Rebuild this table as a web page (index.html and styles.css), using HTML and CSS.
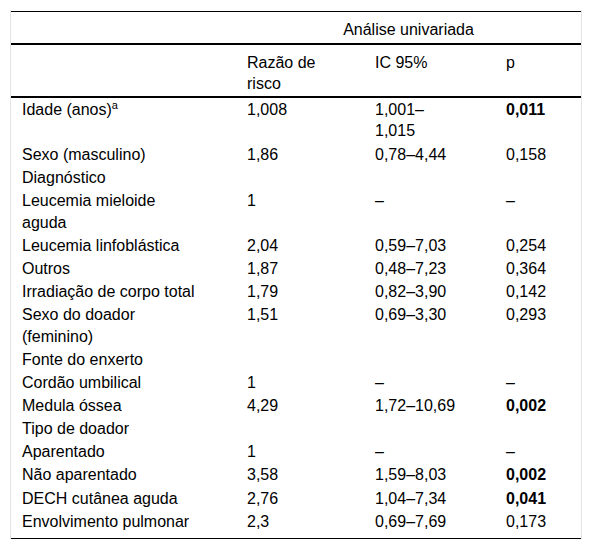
FILE: index.html
```html
<!DOCTYPE html>
<html lang="pt">
<head>
<meta charset="utf-8">
<link rel="stylesheet" href="styles.css">
</head>
<body>
<div class="frame">
<table class="tbl">
<colgroup><col class="c1"><col class="c2"><col class="c3"><col class="c4"></colgroup>
<thead>
<tr class="group"><th></th><th colspan="3" class="center">Análise univariada</th></tr>
<tr class="cols"><th></th><th>Razão de risco</th><th>IC 95%</th><th>p</th></tr>
</thead>
<tbody>
<tr><td>Idade (anos)<sup>a</sup></td><td>1,008</td><td>1,001–<br>1,015</td><td><b>0,011</b></td></tr>
<tr><td>Sexo (masculino)</td><td>1,86</td><td>0,78–4,44</td><td>0,158</td></tr>
<tr><td>Diagnóstico</td><td></td><td></td><td></td></tr>
<tr><td>Leucemia mieloide aguda</td><td>1</td><td>–</td><td>–</td></tr>
<tr><td>Leucemia linfoblástica</td><td>2,04</td><td>0,59–7,03</td><td>0,254</td></tr>
<tr><td>Outros</td><td>1,87</td><td>0,48–7,23</td><td>0,364</td></tr>
<tr><td>Irradiação de corpo total</td><td>1,79</td><td>0,82–3,90</td><td>0,142</td></tr>
<tr><td>Sexo do doador (feminino)</td><td>1,51</td><td>0,69–3,30</td><td>0,293</td></tr>
<tr><td>Fonte do enxerto</td><td></td><td></td><td></td></tr>
<tr><td>Cordão umbilical</td><td>1</td><td>–</td><td>–</td></tr>
<tr><td>Medula óssea</td><td>4,29</td><td>1,72–10,69</td><td><b>0,002</b></td></tr>
<tr><td>Tipo de doador</td><td></td><td></td><td></td></tr>
<tr><td>Aparentado</td><td>1</td><td>–</td><td>–</td></tr>
<tr><td>Não aparentado</td><td>3,58</td><td>1,59–8,03</td><td><b>0,002</b></td></tr>
<tr><td>DECH cutânea aguda</td><td>2,76</td><td>1,04–7,34</td><td><b>0,041</b></td></tr>
<tr class="last"><td>Envolvimento pulmonar</td><td>2,3</td><td>0,69–7,69</td><td>0,173</td></tr>
</tbody>
</table>
</div>
</body>
</html>
```
FILE: styles.css
```css
html, body {
  margin: 0;
  padding: 0;
  background: #fff;
}
body {
  padding: 10px 10px 0 10px;
  font-family: "Liberation Sans", Arial, sans-serif;
  font-size: 16px;
  color: #000;
}
.frame {
  border-left: 1px solid #e4e4e4;
  border-right: 1px solid #e4e4e4;
  padding-top: 1px;
  width: 570px;
}
.tbl {
  width: 570px;
  border-collapse: collapse;
  table-layout: fixed;
  line-height: 21.9px;
}
.c1 { width: 225px; }
.c2 { width: 128px; }
.c3 { width: 131px; }
.c4 { width: 86px; }
.tbl th {
  font-weight: normal;
}
.tbl th, .tbl td {
  padding: 0.6px 38px 0.6px 11px;
  vertical-align: top;
  text-align: left;
}
.tbl .group th.center {
  text-align: center;
  padding-left: 0;
  padding-right: 0;
}
.group th {
  border-top: 1px solid #000;
  border-bottom: 2px solid #000;
  padding-top: 7px;
  padding-bottom: 2px;
}
.cols th {
  border-bottom: 2px solid #000;
  padding-top: 6.6px;
  padding-bottom: 0.6px;
}
.tbl tr.last td {
  border-bottom: 1px solid #000;
  padding-bottom: 5px;
}
.tbl sup {
  font-size: 11px;
  line-height: 0;
  vertical-align: 6px;
}
.tbl b { font-weight: bold; }
```
